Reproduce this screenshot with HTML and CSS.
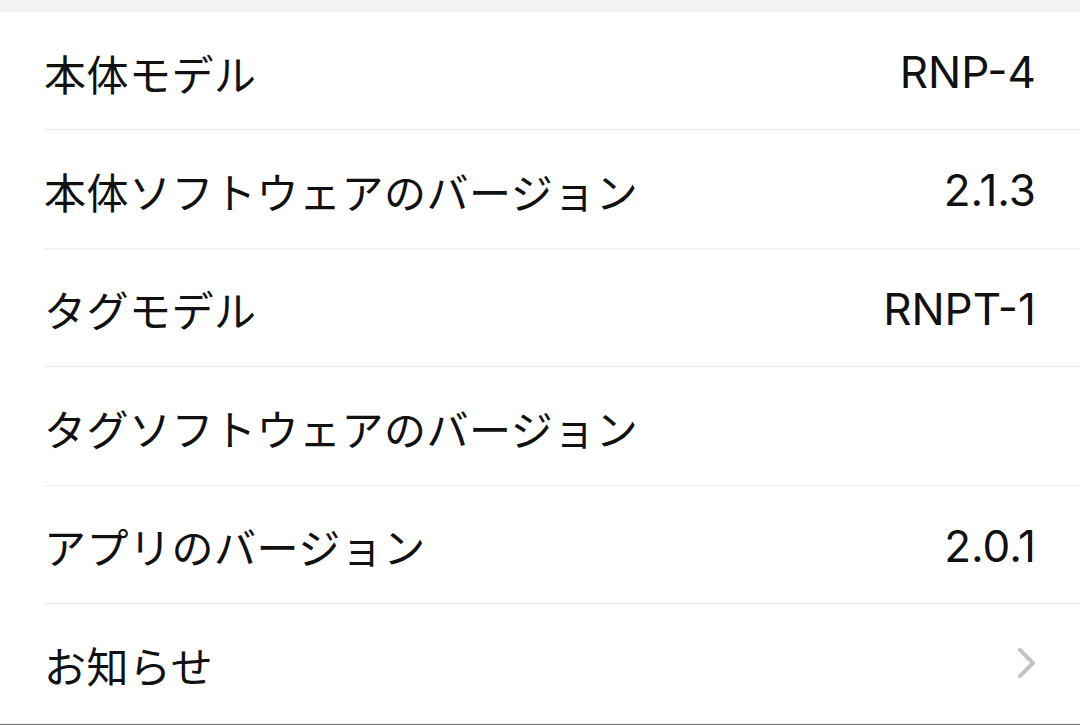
FILE: index.html
```html
<!DOCTYPE html>
<html lang="ja">
<head>
<meta charset="utf-8">
<link rel="stylesheet" href="styles.css">
</head>
<body>
<div class="top"></div>
<ul class="list">
  <li class="row"><span class="label">本体モデル</span><span class="value">RNP-4</span></li>
  <li class="row"><span class="label">本体ソフトウェアのバージョン</span><span class="value">2.1.3</span></li>
  <li class="row"><span class="label">タグモデル</span><span class="value">RNPT-1</span></li>
  <li class="row"><span class="label">タグソフトウェアのバージョン</span><span class="value"></span></li>
  <li class="row"><span class="label">アプリのバージョン</span><span class="value">2.0.1</span></li>
  <li class="row last"><span class="label">お知らせ</span>
    <svg class="chevron" width="20" height="32" viewBox="0 0 20 32"><path d="M3 3 L16 16 L3 29" fill="none" stroke="#c4c4c7" stroke-width="4" stroke-linecap="round" stroke-linejoin="round"/></svg>
  </li>
</ul>
<div class="gap"></div>
<div class="bar"></div>
</body>
</html>
```
FILE: styles.css
```css
html, body {
  margin: 0;
  padding: 0;
  background: #f2f2f2;
  overflow: hidden;
}
.top {
  height: 12px;
}
.list {
  list-style: none;
  margin: 0;
  padding: 0 0 0 44px;
  background: #fff;
}
.row {
  box-sizing: border-box;
  height: 118.5px;
  display: flex;
  align-items: center;
  justify-content: space-between;
  padding: 3px 44px 0 0;
  border-bottom: 1px solid #ececec;
}
.row:first-child {
  height: 118px;
}
.row.last {
  border-bottom: none;
}
.label {
  font-family: "Noto Sans CJK JP", sans-serif;
  font-size: 42px;
  color: #111;
  letter-spacing: 0.5px;
}
.value {
  font-family: Inter, "Liberation Sans", sans-serif;
  font-size: 44px;
  color: #111;
  letter-spacing: 0;
}
.chevron {
  display: block;
  margin-right: -1px;
  margin-top: -3px;
}
.gap {
  height: 1px;
}
.bar {
  height: 3px;
  background: #767676;
}
```
